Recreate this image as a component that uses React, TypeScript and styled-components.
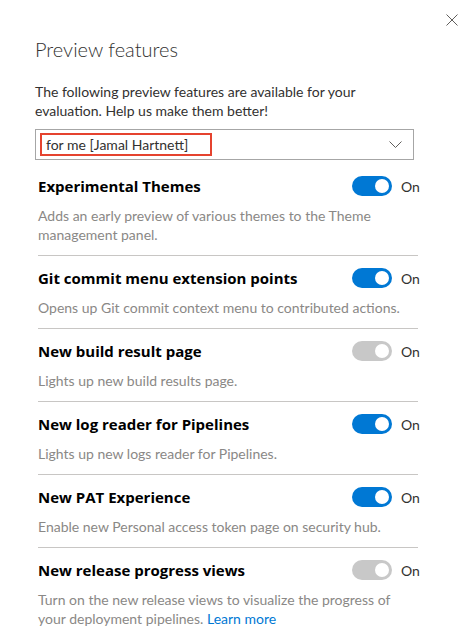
import React from "react";
import styled, { createGlobalStyle } from "styled-components";

const Global = createGlobalStyle`
  html, body { margin: 0; padding: 0; background: #ffffff; }
  body { font-family: Lato, "Open Sans", sans-serif; color: #323130; }
`;

const Panel = styled.div`
  width: 469px;
  height: 643px;
  overflow: hidden;
  box-sizing: border-box;
  padding: 0 0 0 35px;
  background: #fff;
`;

const CloseRow = styled.div`
  display: flex;
  justify-content: flex-end;
  padding: 14px 11px 0 0;
  height: 26px;
  box-sizing: border-box;
`;

const CloseButton = styled.button`
  width: 12px;
  height: 12px;
  padding: 0;
  border: none;
  background: none;
  display: flex;
  cursor: pointer;
`;

const Title = styled.h1`
  margin: 9px 0 0;
  font-size: 20px;
  line-height: 28px;
  font-weight: 300;
  color: #323130;
`;

const Intro = styled.p`
  margin: 19px 0 0;
  width: 380px;
  font-size: 14px;
  line-height: 19px;
  color: #323130;
`;

const Dropdown = styled.div`
  margin-top: 9px;
  width: 379px;
  height: 31px;
  box-sizing: border-box;
  border: 1px solid #a6a6a6;
  display: flex;
  align-items: center;
  justify-content: space-between;
  padding: 0 11px 0 4px;
`;

const Highlight = styled.span`
  display: inline-flex;
  align-items: center;
  height: 23px;
  box-sizing: border-box;
  border: 2px solid #e5432f;
  padding: 0 22px 0 4px;
  font-size: 14px;
  color: #323130;
`;

const List = styled.div`
  margin-top: 4px;
  width: 380px;
  margin-left: 3px;
`;

const Item = styled.div<{ $last?: boolean }>`
  padding: 12px 0 11px;
  border-bottom: 1px solid ${(p) => (p.$last ? "transparent" : "#c8c6c4")};
`;

const Head = styled.div`
  display: flex;
  align-items: center;
  justify-content: space-between;
  height: 20px;
`;

const ItemTitle = styled.div`
  font-family: "Open Sans", "Noto Sans", sans-serif;
  font-size: 15px;
  font-weight: 700;
  color: #000;
  line-height: 20px;
`;

const ToggleGroup = styled.div`
  display: flex;
  align-items: center;
  gap: 9px;
`;

const Track = styled.div<{ $on: boolean }>`
  width: 40px;
  height: 20px;
  border-radius: 10px;
  box-sizing: border-box;
  background: ${(p) => (p.$on ? "#0078d4" : "#c8c8c8")};
  display: flex;
  align-items: center;
  justify-content: flex-end;
  padding-right: 3px;
`;

const Knob = styled.div`
  width: 14px;
  height: 14px;
  border-radius: 50%;
  background: #fff;
`;

const OnLabel = styled.span`
  font-size: 14px;
  color: #323130;
  width: 17px;
`;

const Desc = styled.p`
  margin: 10px 0 0;
  font-size: 14px;
  line-height: 19px;
  color: #8a8886;
`;

const Link = styled.a`
  color: #0078d4;
  text-decoration: none;
`;

type Feature = { title: string; desc: React.ReactNode; on: boolean };

const features: Feature[] = [
  {
    title: "Experimental Themes",
    desc: "Adds an early preview of various themes to the Theme management panel.",
    on: true,
  },
  {
    title: "Git commit menu extension points",
    desc: "Opens up Git commit context menu to contributed actions.",
    on: true,
  },
  { title: "New build result page", desc: "Lights up new build results page.", on: false },
  {
    title: "New log reader for Pipelines",
    desc: "Lights up new logs reader for Pipelines.",
    on: true,
  },
  {
    title: "New PAT Experience",
    desc: "Enable new Personal access token page on security hub.",
    on: true,
  },
  {
    title: "New release progress views",
    desc: (
      <>
        Turn on the new release views to visualize the progress of your deployment
        pipelines. <Link href="#">Learn more</Link>
      </>
    ),
    on: false,
  },
];

export default function App() {
  return (
    <>
      <Global />
      <Panel>
        <CloseRow>
          <CloseButton aria-label="Close">
            <svg width="12" height="12" viewBox="0 0 12 12">
              <path d="M0.5 0.5 L11.5 11.5 M11.5 0.5 L0.5 11.5" stroke="#605e5c" strokeWidth="1" />
            </svg>
          </CloseButton>
        </CloseRow>
        <Title>Preview features</Title>
        <Intro>
          The following preview features are available for your evaluation. Help us make
          them better!
        </Intro>
        <Dropdown>
          <Highlight>for me [Jamal Hartnett]</Highlight>
          <svg width="13" height="7" viewBox="0 0 13 7">
            <path d="M0.5 0.5 L6.5 6.5 L12.5 0.5" fill="none" stroke="#605e5c" strokeWidth="1" />
          </svg>
        </Dropdown>
        <List>
          {features.map((f, i) => (
            <Item key={f.title} $last={i === features.length - 1}>
              <Head>
                <ItemTitle>{f.title}</ItemTitle>
                <ToggleGroup>
                  <Track $on={f.on}>
                    <Knob />
                  </Track>
                  <OnLabel>On</OnLabel>
                </ToggleGroup>
              </Head>
              <Desc>{f.desc}</Desc>
            </Item>
          ))}
        </List>
      </Panel>
    </>
  );
}
